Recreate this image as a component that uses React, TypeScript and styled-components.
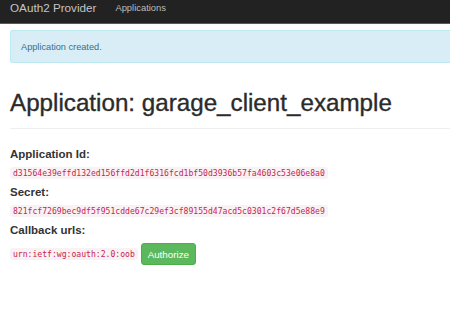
import React from 'react';
import styled, { createGlobalStyle } from 'styled-components';

const GlobalStyle = createGlobalStyle`
  html, body {
    margin: 0;
    padding: 0;
    background: #fff;
    overflow: hidden;
  }
  body {
    font-family: "Liberation Sans", Arial, sans-serif;
    color: #333;
  }
`

const Navbar = styled.nav`
  display: flex;
  align-items: flex-start;
  height: 23px;
  padding: 0 10px;
  gap: 19px;
  background: #222;
  border-bottom: 1px solid #5a5a5a;
`

const Brand = styled.span`
  font-size: 11.7px;
  line-height: 15px;
  color: #c4c4c4;
`

const NavLink = styled.span`
  font-size: 9.4px;
  line-height: 15px;
  color: #bbb;
`

const Container = styled.div`
  padding: 6px 0 0 10px;
`

const Alert = styled.div`
  box-sizing: border-box;
  height: 33px;
  display: flex;
  align-items: center;
  padding: 0 10px;
  background: #d9edf7;
  border: 1px solid #bce8f1;
  border-right: none;
  border-radius: 3px 0 0 3px;
  color: #31708f;
  font-size: 9.2px;
`

const PageHeader = styled.div`
  margin-top: 25px;
  padding-bottom: 10px;
  border-bottom: 1px solid #eee;
`

const Title = styled.h1`
  margin: 0;
  font-size: 24.2px;
  font-weight: normal;
  line-height: 30px;
  color: #2b2b2b;
  -webkit-text-stroke: 0.35px #2b2b2b;
`

const Details = styled.div`
  margin-top: 16px;
`

const Label = styled.h4`
  margin: 0;
  font-size: 11.5px;
  font-weight: bold;
  line-height: 18px;
  color: #333;
`

const CodeRow = styled.div`
  display: flex;
  align-items: center;
  gap: 3px;
  margin: 4px 0;
`

const Code = styled.code`
  display: inline-block;
  font-family: "DejaVu Sans Mono", "Liberation Mono", monospace;
  font-size: 8.1px;
  line-height: 12px;
  padding: 0 3px;
  color: #c7254e;
  background: #f9f2f4;
  border-radius: 3px;
`

const Button = styled.button`
  box-sizing: border-box;
  font-family: "Liberation Sans", Arial, sans-serif;
  font-size: 9.8px;
  color: #fff;
  background: #5cb85c;
  border: 1px solid #4cae4c;
  border-radius: 3px;
  height: 22px;
  width: 55px;
  padding: 0;
`

export default function App() {
  return (
    <>
      <GlobalStyle />
      <Navbar>
        <Brand>OAuth2 Provider</Brand>
        <NavLink>Applications</NavLink>
      </Navbar>
      <Container>
        <Alert>Application created.</Alert>
        <PageHeader>
          <Title>Application: garage_client_example</Title>
        </PageHeader>
        <Details>
          <Label>Application Id:</Label>
          <CodeRow>
            <Code>d31564e39effd132ed156ffd2d1f6316fcd1bf50d3936b57fa4603c53e06e8a0</Code>
          </CodeRow>
          <Label>Secret:</Label>
          <CodeRow>
            <Code>821fcf7269bec9df5f951cdde67c29ef3cf89155d47acd5c0301c2f67d5e88e9</Code>
          </CodeRow>
          <Label>Callback urls:</Label>
          <CodeRow>
            <Code>urn:ietf:wg:oauth:2.0:oob</Code>
            <Button>Authorize</Button>
          </CodeRow>
        </Details>
      </Container>
    </>
  )
}
